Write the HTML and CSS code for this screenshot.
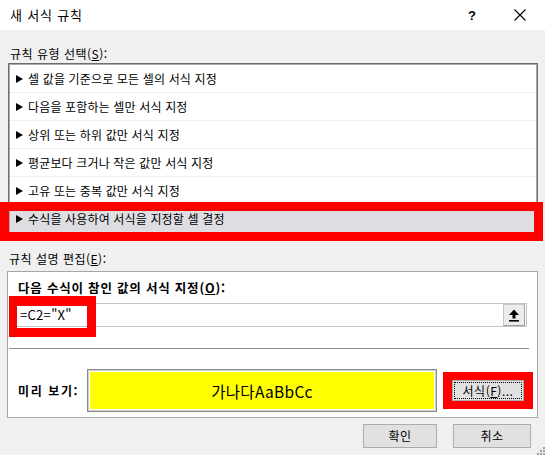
FILE: index.html
```html
<!DOCTYPE html>
<html lang="ko">
<head>
<meta charset="utf-8">
<title>새 서식 규칙</title>
<link rel="stylesheet" href="styles.css">
</head>
<body>
<div class="window">
  <div class="titlebar">
    <span class="title">새 서식 규칙</span>
    <span class="help">?</span>
    <span class="close"><svg width="12" height="12" viewBox="0 0 12 12"><path d="M0.5 0.5 L11.5 11.5 M11.5 0.5 L0.5 11.5" stroke="#000" stroke-width="1.1" fill="none"/></svg></span>
  </div>
  <div class="body">
    <div class="label label-top">규칙 유형 선택(<u>S</u>):</div>
    <div class="listbox">
      <div class="row"><svg class="tri" width="7" height="8" viewBox="0 0 7 8"><path d="M0 0 L7 4 L0 8 Z" fill="#000"/></svg>셀 값을 기준으로 모든 셀의 서식 지정</div>
      <div class="row"><svg class="tri" width="7" height="8" viewBox="0 0 7 8"><path d="M0 0 L7 4 L0 8 Z" fill="#000"/></svg>다음을 포함하는 셀만 서식 지정</div>
      <div class="row"><svg class="tri" width="7" height="8" viewBox="0 0 7 8"><path d="M0 0 L7 4 L0 8 Z" fill="#000"/></svg>상위 또는 하위 값만 서식 지정</div>
      <div class="row"><svg class="tri" width="7" height="8" viewBox="0 0 7 8"><path d="M0 0 L7 4 L0 8 Z" fill="#000"/></svg>평균보다 크거나 작은 값만 서식 지정</div>
      <div class="row"><svg class="tri" width="7" height="8" viewBox="0 0 7 8"><path d="M0 0 L7 4 L0 8 Z" fill="#000"/></svg>고유 또는 중복 값만 서식 지정</div>
      <div class="row selected"><svg class="tri" width="7" height="8" viewBox="0 0 7 8"><path d="M0 0 L7 4 L0 8 Z" fill="#000"/></svg>수식을 사용하여 서식을 지정할 셀 결정<span class="mark mark-row"></span></div>
    </div>
    <div class="label label-edit">규칙 설명 편집(<u>E</u>):</div>
    <div class="panel">
      <div class="panel-top">
        <div class="bold-label formula-label">다음 수식이 참인 값의 서식 지정(<u>O</u>):</div>
        <div class="formula">
          <span class="formula-text">=C2="X"</span>
          <span class="ref-btn"><svg width="12" height="13" viewBox="0 0 12 13"><path d="M6 0.5 L11 6 L7.5 6 L7.5 9.5 L4.5 9.5 L4.5 6 L1 6 Z" fill="#000"/><rect x="1" y="11" width="10" height="1.6" fill="#000"/></svg></span>
          <span class="mark mark-formula"></span>
        </div>
      </div>
      <div class="sep"></div>
      <div class="preview-row">
        <span class="bold-label preview-label">미리 보기:</span>
        <div class="preview-box"><div class="preview-fill">가나다AaBbCc</div></div>
        <div class="format-wrap">
          <button class="btn format-btn"><span class="focus">서식(<u>F</u>)...</span></button>
          <span class="mark mark-format"></span>
        </div>
      </div>
    </div>
    <div class="actions">
      <button class="btn btn-ok">확인</button>
      <button class="btn btn-cancel">취소</button>
    </div>
    <svg class="grip" width="10" height="10" viewBox="0 0 10 10"><g fill="#a0a0a0"><rect x="8" y="2" width="2" height="2"/><rect x="5" y="5" width="2" height="2"/><rect x="8" y="5" width="2" height="2"/><rect x="2" y="8" width="2" height="2"/><rect x="5" y="8" width="2" height="2"/><rect x="8" y="8" width="2" height="2"/></g></svg>
  </div>
</div>
</body>
</html>
```

FILE: styles.css
```css
* { box-sizing: border-box; }
html, body { margin: 0; padding: 0; }
body {
  width: 545px;
  height: 455px;
  overflow: hidden;
  font-family: "Noto Sans CJK KR", "Noto Sans", sans-serif;
  font-size: 12px;
  color: #000;
  background: #fff;
}
u { text-decoration: underline; text-underline-offset: 1px; }

.window { width: 545px; height: 455px; }

.titlebar {
  height: 30px;
  display: flex;
  align-items: center;
  padding-left: 10px;
  padding-right: 2px;
  background: #fff;
}
.title { font-size: 13px; line-height: 18px; letter-spacing: 0.8px; }
.help {
  margin-left: auto;
  width: 20px;
  text-align: center;
  font-size: 13px;
  font-weight: 700;
  font-family: "Liberation Sans", sans-serif;
}
.close {
  width: 46px;
  margin-left: 15px;
  display: flex;
  justify-content: center;
  align-items: center;
}

.body {
  position: relative;
  height: 425px;
  background: #f0f0f0;
  padding: 15px 7px 0 8px;
}

.label { line-height: 18px; letter-spacing: 0.5px; }
.label-top { padding-left: 2px; }
.label-edit { margin-top: 15px; padding-left: 1px; }

.listbox {
  border: 1px solid #6e6e6e;
  box-shadow: inset 0 0 0 1px #a8a8a8;
  padding: 1px;
  background: #fff;
}
.row {
  position: relative;
  height: 28px;
  display: flex;
  align-items: center;
  padding-left: 6px;
  border-bottom: 1px solid #efefef;
  line-height: 18px;
  letter-spacing: 0.15px;
}
.row:last-child { border-bottom: none; }
.tri { margin-right: 5px; flex: none; }
.row.selected { background: #dddde2; }

.mark {
  position: absolute;
  border: 9px solid #ff0000;
  pointer-events: none;
}
.mark-row { left: -10px; top: -3px; width: 543px; height: 39px; }

.panel {
  margin-top: 3px;
  margin-left: -1px;
  width: 531px;
  border: 1px solid #a6a6a6;
  background: #fff;
}
.panel-top { padding: 7px 10px 21px 4px; }
.bold-label { font-weight: 700; line-height: 18px; }
.formula-label { padding-left: 6px; font-size: 12.5px; letter-spacing: 0.8px; }

.formula {
  position: relative;
  height: 24px;
  margin-top: 6px;
  border: 1px solid #c4c4c4;
  display: flex;
  align-items: center;
  background: #fff;
}
.formula-text {
  flex: 1;
  padding-left: 7px;
  font-size: 13px;
  line-height: 18px;
  letter-spacing: 0.3px;
}
.ref-btn {
  width: 22px;
  height: 22px;
  margin-right: 1px;
  background: #ececec;
  border: 1px solid #c8c8c8;
  border-right-color: #a0a0a0;
  border-bottom-color: #a0a0a0;
  display: flex;
  align-items: center;
  justify-content: center;
}
.mark-formula { left: -4px; top: -8px; width: 87px; height: 41px; border-width: 10px 9px 9px 8px; }

.sep {
  height: 1px;
  background: #8f8f8f;
  margin: 0 8px 0 1px;
}

.preview-row {
  height: 68px;
  padding: 20px 0 5px 10px;
  display: flex;
  align-items: center;
}
.preview-label { width: 69px; flex: none; letter-spacing: 1.6px; }
.preview-box {
  width: 350px;
  height: 43px;
  border: 1px solid #8a8a8a;
  box-shadow: inset 0 0 0 1px #cfcfcf;
  padding: 2px;
  background: #fff;
  flex: none;
}
.preview-fill {
  height: 100%;
  background: #ffff00;
  display: flex;
  align-items: center;
  justify-content: center;
  font-size: 15.5px;
  line-height: 20px;
  letter-spacing: 0.3px;
}
.format-wrap {
  position: relative;
  margin-left: 15px;
  display: flex;
}
.btn {
  font-family: "Noto Sans CJK KR", "Noto Sans", sans-serif;
  font-size: 12px;
  color: #000;
  background: #e1e1e1;
  border: 1px solid #adadad;
  padding: 0;
  margin: 0;
  line-height: 18px;
  letter-spacing: 0.5px;
}
.format-btn {
  width: 72px;
  height: 21px;
  padding: 1px;
  display: flex;
}
.focus {
  flex: 1;
  border: 1px dotted #000;
  display: flex;
  align-items: center;
  justify-content: center;
  line-height: 16px;
}
.mark-format { left: -9px; top: -8px; width: 90px; height: 37px; border-width: 8px 9px; }

.actions {
  margin-top: 6px;
  display: flex;
  justify-content: flex-end;
  gap: 16px;
  padding-right: 7px;
}
.btn-ok { width: 74px; height: 24px; }
.btn-cancel { width: 78px; height: 24px; }

.grip { position: absolute; right: 0; bottom: 0; }
```
